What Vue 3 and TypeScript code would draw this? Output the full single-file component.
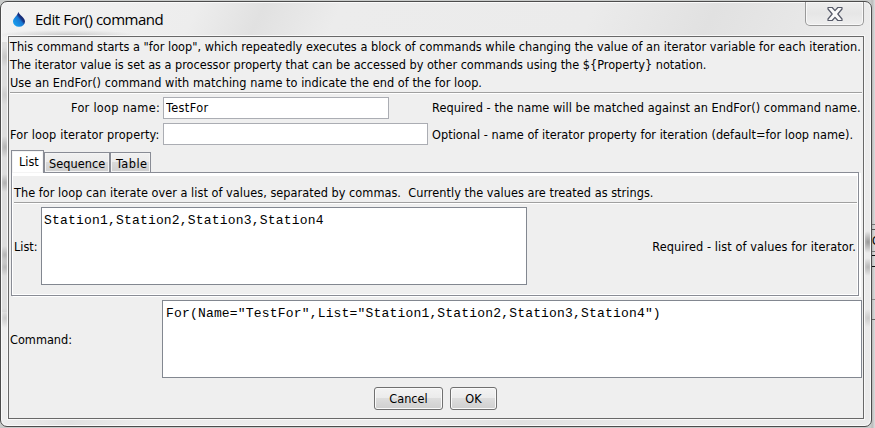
<script setup lang="ts">
import { ref } from 'vue'

interface Tab {
  id: string
  label: string
}

const intro: string[] = [
  'This command starts a "for loop", which repeatedly executes a block of commands while changing the value of an iterator variable for each iteration.',
  'The iterator value is set as a processor property that can be accessed by other commands using the ${Property} notation.',
  'Use an EndFor() command with matching name to indicate the end of the for loop.',
]
const tabs: Tab[] = [
  { id: 'list', label: 'List' },
  { id: 'sequence', label: 'Sequence' },
  { id: 'table', label: 'Table' },
]
const activeTab = ref('list')
const loopName = ref('TestFor')
const iteratorProperty = ref('')
const list = ref('Station1,Station2,Station3,Station4')
const command = ref('For(Name="TestFor",List="Station1,Station2,Station3,Station4")')
</script>

<template>
  <div class="desktop">
    <div class="behind"><span class="peek">C</span></div>
    <div class="window">
      <header class="titlebar">
        <svg class="drop" width="14" height="17" viewBox="0 0 14 17">
          <defs>
            <linearGradient id="dropFill" x1="0" y1="1" x2="1" y2="0">
              <stop offset="0.1" stop-color="#16a0f0" />
              <stop offset="0.5" stop-color="#1879d4" />
              <stop offset="0.62" stop-color="#17307f" />
              <stop offset="1" stop-color="#14205c" />
            </linearGradient>
          </defs>
          <path d="M6.3 .8C7 4 13 6.500 13 10.500A6 5.200 0 0 1 1 10.500C1 7 5.600 5 6.300 .8Z" fill="url(#dropFill)" />
        </svg>
        <h1 class="title">Edit For() command</h1>
        <button class="close" aria-label="Close">
          <svg width="18" height="16" viewBox="0 0 18 16">
            <path
              d="M2 1.500H6.200L9 4.700L11.800 1.500H16V3L11.800 8L16 13V14.500H11.800L9 11.300L6.200 14.500H2V13L6.200 8L2 3Z"
              fill="#fafafa"
              stroke="#555968"
              stroke-width="1.2"
              stroke-linejoin="round"
            />
          </svg>
        </button>
      </header>

      <main class="client">
        <div class="intro">
          <p v-for="(line, i) in intro" :key="i" :class="'intro-' + i">{{ line }}</p>
        </div>
        <hr class="rule" />

        <div class="form">
          <label class="name-label">For loop name:</label>
          <input v-model="loopName" class="field short" spellcheck="false" />
          <span class="note-a">Required - the name will be matched against an EndFor() command name.</span>
          <label class="prop-label">For loop iterator property:</label>
          <input v-model="iteratorProperty" class="field" spellcheck="false" />
          <span class="note-b">Optional - name of iterator property for iteration (default=for loop name).</span>
        </div>

        <nav class="tabs">
          <button
            v-for="tab in tabs"
            :key="tab.id"
            class="tab"
            :class="[tab.id, { active: tab.id === activeTab }]"
            @click="activeTab = tab.id"
          >
            {{ tab.label }}
          </button>
        </nav>
        <section class="panel">
          <p class="panel-intro">The for loop can iterate over a list of values, separated by commas.&nbsp; Currently the values are treated as strings.</p>
          <hr class="rule" />
          <div class="list-row">
            <label class="list-label">List:</label>
            <textarea v-model="list" class="area list-area" spellcheck="false"></textarea>
            <span class="note-c">Required - list of values for iterator.</span>
          </div>
        </section>

        <div class="command-row">
          <label class="command-label">Command:</label>
          <textarea v-model="command" class="area command-area" spellcheck="false"></textarea>
        </div>

        <footer class="actions">
          <button class="push cancel">Cancel</button>
          <button class="push ok">OK</button>
        </footer>
      </main>
    </div>
  </div>
</template>

<style>
body {
  margin: 0;
  overflow: hidden;
}
</style>

<style scoped>
* {
  box-sizing: border-box;
}
.desktop {
  position: relative;
  width: 875px;
  height: 428px;
  overflow: hidden;
  background: linear-gradient(90deg, #c9cbca 0, #c9cbca 871px, #b9b9b9 872px, #dedede 875px);
  font-family: 'DejaVu Sans Condensed', 'DejaVu Sans', sans-serif;
  font-stretch: condensed;
  font-size: 12.6px;
  color: #000;
}
.behind {
  position: absolute;
  right: 0;
  top: 224px;
  width: 4px;
  height: 96px;
  overflow: hidden;
  border-top: 1px solid #777;
  border-bottom: 1px solid #666;
  background: linear-gradient(transparent 4px, #555 4px, #555 5px, transparent 5px, transparent 26px, #777 26px, #777 27px, transparent 27px, transparent 30px, #111 30px, #111 31px, transparent 31px, transparent 41px, #111 41px, #111 42px, transparent 42px, transparent 74px, #888 74px, #888 75px, transparent 75px);
}
.peek {
  display: block;
  padding: 9px 0 0 1px;
  font-size: 12px;
}
.window {
  position: relative;
  display: flex;
  flex-direction: column;
  width: 872px;
  height: 426px;
  margin-top: 1px;
  padding: 0 7px 8px;
  border: 1px solid #4c4c4c;
  border-radius: 7px;
  box-shadow: inset 0 0 0 1px #fafafa;
  background:
    radial-gradient(ellipse 7px 11px at 4px 145px, #b4b4b4, transparent),
    radial-gradient(ellipse 7px 9px at 4px 181px, #b0b0b0, transparent),
    radial-gradient(ellipse 7px 9px at 4px 253px, #b4b4b4, transparent),
    radial-gradient(ellipse 7px 9px at 4px 265px, #b8b8b8, transparent),
    radial-gradient(ellipse 7px 10px at 4px 55px, #c6c6c6, transparent),
    radial-gradient(ellipse 7px 10px at 4px 93px, #cccccc, transparent),
    radial-gradient(ellipse 7px 10px at 4px 316px, #cacaca, transparent),
    radial-gradient(ellipse 8px 11px at 867px 240px, #989898, transparent),
    radial-gradient(ellipse 8px 9px at 867px 265px, #b6b6b6, transparent),
    radial-gradient(ellipse 8px 9px at 867px 316px, #cacaca, transparent),
    radial-gradient(ellipse 70px 5px at 65px 33px, #cccccc, transparent),
    linear-gradient(90deg, #dedede 0, #dedede 7px, transparent 7px) 0 40px / 100% 270px no-repeat,
    linear-gradient(115deg, #f2f2f2 0, #ededed 180px, #e1e1e1 240px, #ececec 310px, #ebebeb 540px, #e1e1e1 650px, #ececec 800px, #eaeaea);
}
.titlebar {
  display: flex;
  align-items: flex-start;
  height: 34px;
  flex: none;
}
.drop {
  margin: 9px 0 0 4px;
}
.title {
  margin: 6px auto 0 9px;
  font: 400 15px/22px 'Open Sans', 'Noto Sans', sans-serif;
  letter-spacing: -0.48px;
  white-space: pre;
}
.close {
  display: flex;
  align-items: center;
  justify-content: center;
  width: 59px;
  height: 24px;
  padding: 0;
  border: 1px solid #999;
  border-top: 0;
  border-radius: 0 0 5px 5px;
  background: linear-gradient(#ededed, #e6e6e6 50%, #eeeeee);
  box-shadow: inset 0 0 0 1px #f8f8f8;
}
.client {
  display: flex;
  flex-direction: column;
  flex: none;
  width: 856px;
  height: 383px;
  border: 1px solid #686868;
  box-shadow: 0 0 0 1px #f8f8f8;
  background: #efefef;
  padding: 1px;
}
p {
  margin: 0;
  white-space: pre;
}
label,
span {
  white-space: pre;
}
.intro {
  height: 54px;
  line-height: 18px;
}
.intro-0 {
  letter-spacing: 0.01px;
}
.intro-1 {
  letter-spacing: -0.015px;
}
.intro-2 {
  letter-spacing: 0.035px;
}
.rule {
  flex: none;
  width: 100%;
  height: 2px;
  margin: 0;
  border: 0;
  border-top: 1px solid #a0a0a0;
  background: #fff;
}
.form {
  display: grid;
  grid-template-columns: 153px 265px 1fr;
  grid-template-rows: 22px 22px;
  row-gap: 4px;
  align-items: center;
  margin-top: 3px;
  line-height: 22px;
}
.name-label {
  text-align: right;
  padding-right: 3px;
  letter-spacing: 0.28px;
}
.prop-label {
  padding-top: 1px;
  letter-spacing: 0.12px;
}
.note-a,
.note-b {
  padding-left: 4px;
}
.note-a {
  letter-spacing: 0.07px;
}
.note-b {
  padding-top: 1px;
  letter-spacing: 0.03px;
}
.field {
  width: 265px;
  height: 22px;
  border: 1px solid #abadb3;
  border-radius: 0;
  padding: 0 2px;
  background: #fff;
  font: inherit;
  letter-spacing: 0.4px;
  outline: 0;
}
.field.short {
  width: 226px;
}
.tabs {
  display: flex;
  align-items: flex-end;
  height: 22px;
  margin: 5px 0 0 1px;
}
.tab {
  height: 20px;
  padding: 0 0 0 5px;
  border: 1px solid #898c95;
  border-bottom: 0;
  background: linear-gradient(#f1f1f1, #ebebeb 48%, #dadada 50%, #cfcfcf);
  box-shadow: inset 0 0 0 1px #f4f4f4;
  font: inherit;
  line-height: 21px;
  text-align: left;
}
.tab.list {
  width: 33px;
  padding-left: 7px;
}
.tab.sequence {
  width: 66px;
  padding-left: 4px;
  letter-spacing: 0.05px;
}
.tab.table {
  width: 41px;
  letter-spacing: 0.5px;
}
.tab.active {
  position: relative;
  height: 23px;
  margin-bottom: -1px;
  background: #fff;
  line-height: 20px;
}
.panel {
  width: 848px;
  height: 124px;
  margin-left: 1px;
  border: 1px solid #898c95;
  box-shadow: 2px 1px 0 #fff, inset 1px 0 0 #fff, inset -1px -1px 0 #fff;
  padding: 0 1px 0 2px;
  background: linear-gradient(#fff 3px, transparent 3px);
}
.panel-intro {
  height: 29px;
  padding-top: 11px;
  line-height: 18px;
  letter-spacing: 0.03px;
}
.list-row {
  display: flex;
  align-items: center;
  margin-top: 3px;
}
.list-label {
  width: 27px;
}
.note-c {
  margin-left: auto;
  padding-right: 1px;
  letter-spacing: 0.08px;
}
.area {
  display: block;
  height: 78px;
  border: 1px solid #828790;
  border-radius: 0;
  margin: 0;
  padding: 5px 2px;
  resize: none;
  overflow: hidden;
  outline: 0;
  background: #fff;
  color: #000;
  font: 13px/15px 'Liberation Mono', monospace;
  letter-spacing: 0.19px;
}
.list-area {
  width: 486px;
}
.command-row {
  display: flex;
  align-items: center;
  margin-top: 4px;
}
.command-label {
  width: 152px;
}
.command-area {
  width: 700px;
  padding-left: 3px;
  letter-spacing: 0.18px;
}
.actions {
  display: flex;
  justify-content: center;
  gap: 7px;
  margin-top: 9px;
  padding-right: 1px;
}
.push {
  height: 23px;
  padding: 0;
  border: 1px solid #707070;
  border-radius: 3px;
  background: linear-gradient(#f3f3f3, #ebebeb 48%, #dddddd 50%, #cfcfcf);
  box-shadow: inset 0 0 0 1px #fafafa;
  font: inherit;
}
.cancel {
  width: 69px;
}
.ok {
  width: 47px;
}
</style>
